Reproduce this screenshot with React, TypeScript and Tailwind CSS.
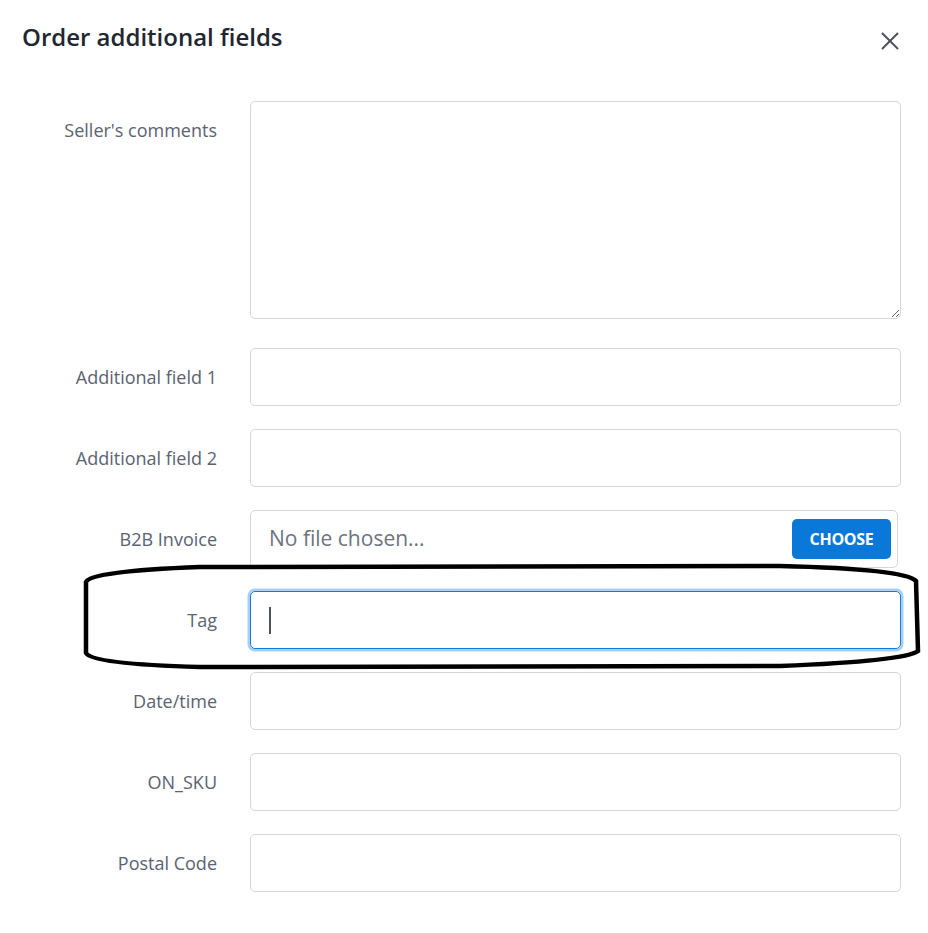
import { X } from 'lucide-react';

const FIELDS = ['Additional field 1', 'Additional field 2'];
const TAIL_FIELDS = ['Date/time', 'ON_SKU', 'Postal Code'];

const inputBox = 'h-[58px] w-[651px] rounded-[5px] border border-[#d3d7dd] bg-white';

function Label({ children }: { children: string }) {
  return (
    <div className="flex h-[58px] w-[217px] shrink-0 items-center justify-end text-[18px] text-[#5b6270]">
      {children}
    </div>
  );
}

function Row({ label, children }: { label: string; children: React.ReactNode }) {
  return (
    <div className="flex items-start gap-[33px]">
      <Label>{label}</Label>
      {children}
    </div>
  );
}

export default function App() {
  return (
    <div className="relative h-[933px] w-[928px] bg-white font-['Open_Sans',sans-serif]">
      <div className="flex items-start justify-between pl-[22px] pr-[23px] pt-[21px]">
        <h1 className="text-[24px] leading-[32px] font-semibold text-[#212631]">Order additional fields</h1>
        <button className="mt-[5px] text-[#4b525c]">
          <X size={30} strokeWidth={1.6} />
        </button>
      </div>

      <div className="mt-[45px] flex flex-col gap-[23px]">
        <div className="flex items-start gap-[33px]">
          <Label>Seller's comments</Label>
          <textarea className="h-[218px] w-[651px] rounded-[5px] border border-[#d3d7dd] outline-none" />
        </div>
        <div className="mt-[6px] flex flex-col gap-[23px]">
          {FIELDS.map((f) => (
            <Row key={f} label={f}>
              <div className={inputBox} />
            </Row>
          ))}

          <Row label="B2B Invoice">
            <div className="flex h-[58px] w-[648px] items-center justify-between rounded-[5px] border border-[#d3d7dd] pl-[18px] pr-[6px]">
              <span className="text-[21px] text-[#6c737e]">No file chosen...</span>
              <span className="flex h-[40px] w-[99px] items-center justify-center rounded-[5px] bg-[#0a78d9] text-[16px] font-bold tracking-[-0.3px] text-white">
                CHOOSE
              </span>
            </div>
          </Row>

          <Row label="Tag">
            <div className="flex h-[58px] w-[651px] items-center rounded-[5px] border border-[#1479d8] pl-[18px] shadow-[0_0_0_2.5px_#a4d0fa]">
              <span className="h-[27px] w-[2px] bg-[#4b525c]" />
            </div>
          </Row>

          {TAIL_FIELDS.map((f) => (
            <Row key={f} label={f}>
              <div className={inputBox} />
            </Row>
          ))}
        </div>
      </div>

      {/* hand-drawn highlight around the Tag row */}
      <svg className="pointer-events-none absolute left-0 top-0" width="928" height="933">
        <path
          d="M86,582 Q90,571 200,567 L780,566 Q905,569 916,581 L918,651 Q905,661 780,666 L200,667 Q92,664 86,653 Z"
          fill="none"
          stroke="#000"
          strokeWidth="4.5"
        />
      </svg>
    </div>
  );
}
